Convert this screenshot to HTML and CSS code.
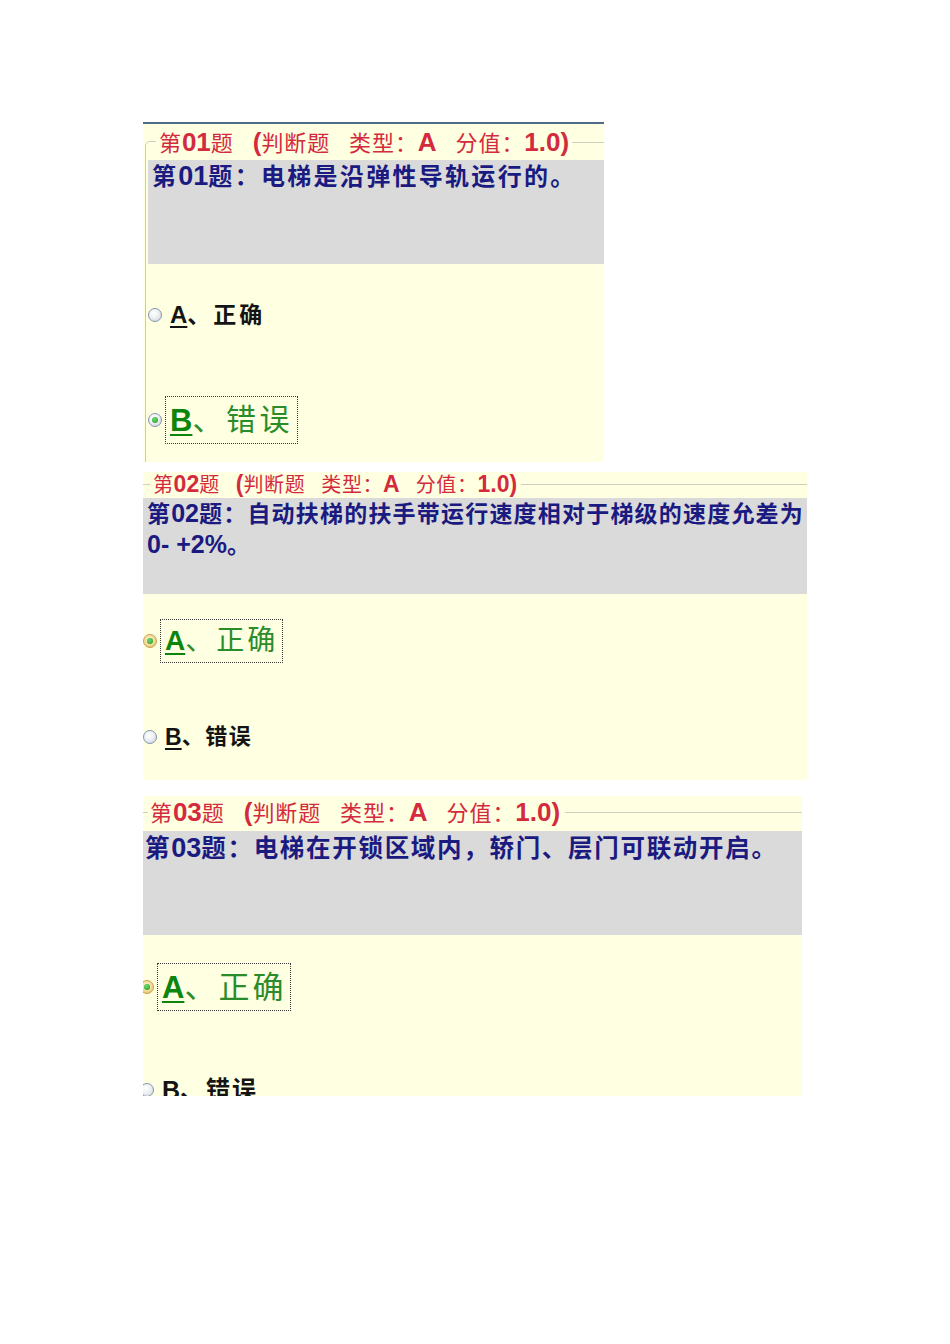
FILE: index.html
```html
<!DOCTYPE html>
<html lang="zh-CN">
<head>
<meta charset="utf-8">
<title>判断题</title>
<link rel="stylesheet" href="styles.css">
</head>
<body>
<div class="page">

  <section class="q q1">
    <div class="head"><span class="t">第<b>01</b>题<i class="sp"></i><b>(</b>判断题<i class="sp"></i>类型：<b>A</b><i class="sp"></i>分值：<b>1.0)</b></span></div>
    <div class="body">
      <div class="stem">第<b>01</b>题：电梯是沿弹性导轨运行的。</div>
      <div class="opts">
        <div class="opt row-a"><span class="radio"></span><span class="lab plain"><b class="k">A</b>、正确</span></div>
        <div class="opt row-b"><span class="radio on"></span><span class="lab focus"><b class="k">B</b>、错误</span></div>
      </div>
    </div>
  </section>

  <section class="q q2">
    <div class="head"><span class="t">第<b>02</b>题<i class="sp"></i><b>(</b>判断题<i class="sp"></i>类型：<b>A</b><i class="sp"></i>分值：<b>1.0)</b></span></div>
    <div class="body">
      <div class="stem">第<b>02</b>题：自动扶梯的扶手带运行速度相对于梯级的速度允差为<br><b>0- +2%</b>。</div>
      <div class="opts">
        <div class="opt row-a"><span class="radio on hot"></span><span class="lab focus"><b class="k">A</b>、正确</span></div>
        <div class="opt row-b"><span class="radio"></span><span class="lab plain"><b class="k">B</b>、错误</span></div>
      </div>
    </div>
  </section>

  <section class="q q3">
    <div class="head"><span class="t">第<b>03</b>题<i class="sp"></i><b>(</b>判断题<i class="sp"></i>类型：<b>A</b><i class="sp"></i>分值：<b>1.0)</b></span></div>
    <div class="body">
      <div class="stem">第<b>03</b>题：电梯在开锁区域内，轿门、层门可联动开启。</div>
      <div class="opts">
        <div class="opt row-a"><span class="radio on hot"></span><span class="lab focus"><b class="k">A</b>、正确</span></div>
        <div class="opt row-b"><span class="radio"></span><span class="lab plain"><b class="k">B</b>、错误</span></div>
      </div>
    </div>
  </section>

</div>
</body>
</html>
```

FILE: styles.css
```css
* { box-sizing: border-box; }
html, body { margin: 0; padding: 0; background: #ffffff; }
body { font-family: "Liberation Sans", "Noto Sans CJK SC", sans-serif; }

.page {
  padding: 122px 0 0 143px;
  display: flex;
  flex-direction: column;
  align-items: flex-start;
}

.q { background: #ffffe1; overflow: hidden; }
.q1 { width: 461px; height: 340px; border-top: 2px solid #4f6b8a; padding-left: 2px; }
.q2 { width: 664px; height: 308px; margin-top: 10px; }
.q3 { width: 659px; height: 300px; margin-top: 16px; }

/* legend row */
.head {
  display: flex;
  align-items: center;
  white-space: nowrap;
  line-height: 1;
  color: #d42a3e;
}
.head::before {
  content: "";
  border-top: 1px solid #cfcfc0;
  flex: none;
}
.head::after {
  content: "";
  flex: 1;
  border-top: 1px solid #cfcfc0;
}
.head .t { font-weight: 400; }
.head b { font-weight: 700; letter-spacing: 0; }
.head .sp { display: inline-block; }

.q1 .head { height: 36px; font-size: 22px; }
.q1 .head .t { letter-spacing: 0.9px; }
.q1 .head b { font-size: 26px; }
.q1 .head .sp { width: 19px; }
.q1 .head::before {
  width: 10px;
  height: 18px;
  align-self: flex-end;
  border-left: 1px solid #c8c8c8;
  border-top-left-radius: 5px;
  margin-right: 3px;
}
.q1 .head::after { margin-left: 3px; }

.q2 .head { height: 24px; padding-bottom: 2px; box-sizing: content-box; font-size: 20px; }
.q2 .head .t { letter-spacing: 0.6px; }
.q2 .head b { font-size: 23px; }
.q2 .head .sp { width: 16px; }
.q2 .head::before { width: 7px; margin-right: 3px; }
.q2 .head::after { margin-left: 4px; }

.q3 .head { height: 32px; padding-bottom: 3px; box-sizing: content-box; font-size: 22px; }
.q3 .head .t { letter-spacing: 0.9px; }
.q3 .head b { font-size: 26px; }
.q3 .head .sp { width: 19px; }
.q3 .head::before { width: 5px; margin-right: 2px; }
.q3 .head::after { margin-left: 5px; }

/* body */
.q1 .body { border-left: 1px solid #c8c8c8; padding-left: 2px; height: 302px; }

.stem {
  background: #dadada;
  color: #1a1a80;
  font-weight: 700;
  white-space: nowrap;
}
.stem b { font-weight: 700; letter-spacing: 0; }

.q1 .stem { height: 104px; padding: 1px 4px 0; font-size: 24px; line-height: 30px; letter-spacing: 2.3px; }
.q1 .stem b { font-size: 27px; }
.q2 .stem { height: 96px; padding: 0 4px; font-size: 23px; line-height: 30px; letter-spacing: 1.2px; }
.q2 .stem b { font-size: 25px; }
.q3 .stem { height: 104px; padding: 1px 2px 0; font-size: 24.5px; line-height: 32px; letter-spacing: 1.7px; }
.q3 .stem b { font-size: 27px; }

/* options */
.opts { display: flex; flex-direction: column; }
.opt { display: flex; align-items: center; flex: none; }

.q1 .opts { padding-top: 27px; gap: 57px; }
.q1 .opt { height: 48px; }
.q2 .opts { padding-top: 25px; gap: 52px; }
.q2 .opt { height: 44px; }
.q3 .opts { padding-top: 28px; gap: 55px; }
.q3 .opt { height: 48px; }

.radio {
  flex: none;
  width: 14px;
  height: 14px;
  border-radius: 50%;
  border: 1px solid #8196ae;
  background: radial-gradient(circle at 40% 35%, #ffffff 0%, #eef0f2 45%, #c9ced6 100%);
  position: relative;
}
.radio.on::after {
  content: "";
  position: absolute;
  left: 3px;
  top: 3px;
  width: 6px;
  height: 6px;
  border-radius: 50%;
  background: radial-gradient(circle at 40% 35%, #6fd86f, #1f9a1f);
}
.radio.hot {
  border-color: #c7a04a;
  background: radial-gradient(circle at 45% 40%, #fff8e0 0%, #f1d58e 60%, #d9a948 100%);
}
.q3 .radio { margin-left: -3px; }

.lab {
  display: flex;
  align-items: center;
  height: 100%;
  margin-left: 3px;
  padding: 0 4px;
  border: 1px dotted transparent;
  white-space: nowrap;
  line-height: 1;
}
.lab .k {
  font-family: "Liberation Sans", sans-serif;
  font-weight: 700;
  text-decoration: underline;
  text-decoration-thickness: 2px;
  text-underline-offset: 3px;
  letter-spacing: 0;
}
.lab.plain { color: #141414; font-weight: 700; }
.lab.focus { border-color: #3a3a3a; color: #2a8c2a; font-weight: 400; }
.lab.focus .k { color: #0b850b; }

.q1 .row-a .lab { font-size: 23px; letter-spacing: 3px; }
.q1 .row-a .lab .k { font-size: 24px; }
.q1 .row-b .lab { font-size: 30px; letter-spacing: 3.5px; }
.q1 .row-b .lab .k { font-size: 31px; }

.q2 .row-a .lab { font-size: 28px; letter-spacing: 3px; }
.q2 .row-a .lab .k { font-size: 28px; }
.q2 .row-b .lab { font-size: 22px; letter-spacing: 1.5px; }
.q2 .row-b .lab .k { font-size: 23px; }

.q3 .row-a .lab { font-size: 31px; letter-spacing: 3px; }
.q3 .row-a .lab .k { font-size: 31px; }
.q3 .row-b .lab { font-size: 24px; letter-spacing: 2px; }
.q3 .row-b .lab .k { font-size: 25px; }
```
